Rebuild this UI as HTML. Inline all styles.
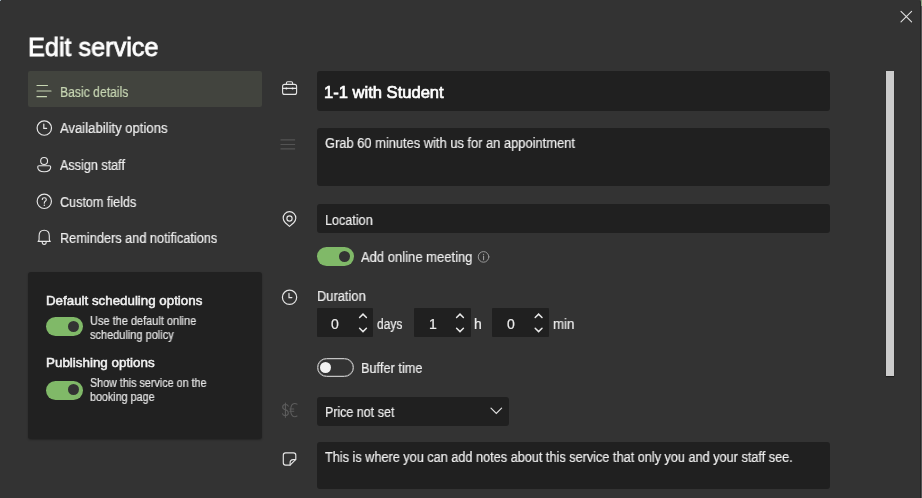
<!DOCTYPE html>
<html><head><meta charset="utf-8">
<style>
html,body{margin:0;padding:0;width:922px;height:498px;overflow:hidden;background:#555;}
body{font-family:"Liberation Sans",sans-serif;position:relative;}
#dlg{position:absolute;left:0;top:0;width:920px;height:498px;background:#333333;border-right:1px solid #262626;border-top-right-radius:3px;overflow:hidden;}
.t{position:absolute;white-space:nowrap;line-height:1;color:#ededed;transform-origin:0 0;will-change:transform;-webkit-text-stroke:0.2px currentColor;}
.box{position:absolute;background:#202020;border-radius:3px;}
svg{position:absolute;left:0;top:0;}
</style></head><body>
<div style="position:absolute;left:0;top:0;width:1px;height:1px;background:#9aabb5;z-index:5"></div>
<div style="position:absolute;left:921px;top:0;width:1px;height:6px;background:#8ba383;"></div>
<div id="dlg">
  <!-- title -->
  <div class="t" style="left:28px;top:34.5px;font-size:25.5px;-webkit-text-stroke:0.8px #fff;color:#fff;transform:scaleX(.99)">Edit service</div>

  <!-- nav -->
  <div class="box" style="left:28px;top:71.2px;width:234px;height:36.2px;background:#42443e;border-radius:2px;"></div>
  <div class="t" style="left:60px;top:85px;font-size:14px;color:#c7d6b3;transform:scaleX(.87)">Basic details</div>
  <div class="t" style="left:60px;top:121px;font-size:14px;transform:scaleX(.935)">Availability options</div>
  <div class="t" style="left:60px;top:157.5px;font-size:14px;transform:scaleX(.9)">Assign staff</div>
  <div class="t" style="left:60px;top:194.5px;font-size:14px;transform:scaleX(.9)">Custom fields</div>
  <div class="t" style="left:60px;top:231px;font-size:14px;transform:scaleX(.91)">Reminders and notifications</div>

  <!-- card -->
  <div class="box" style="left:28px;top:272px;width:234px;height:166.5px;background:#212121;box-shadow:0 1px 2px rgba(0,0,0,.3)"></div>
  <div class="t" style="left:46px;top:294px;font-size:13px;-webkit-text-stroke:0.5px #f2f2f2;color:#f2f2f2;transform:scaleX(1.025)">Default scheduling options</div>
  <div class="box" style="left:46px;top:317px;width:37px;height:19px;border-radius:9.5px;background:#80b968;"></div>
  <div class="box" style="left:68px;top:321.2px;width:11px;height:11px;border-radius:6px;background:#333;"></div>
  <div class="t" style="left:90px;top:313.5px;font-size:12px;line-height:14px;color:#e4e4e4;transform:scaleX(.915)">Use the default online<br>scheduling policy</div>
  <div class="t" style="left:46px;top:356px;font-size:13px;-webkit-text-stroke:0.5px #f2f2f2;color:#f2f2f2;transform:scaleX(1.03)">Publishing options</div>
  <div class="box" style="left:46px;top:380.5px;width:37px;height:19px;border-radius:9.5px;background:#80b968;"></div>
  <div class="box" style="left:68px;top:384.2px;width:11px;height:11px;border-radius:6px;background:#333;"></div>
  <div class="t" style="left:90px;top:375.5px;font-size:12px;line-height:14px;color:#e4e4e4;transform:scaleX(.895)">Show this service on the<br>booking page</div>

  <!-- form -->
  <div class="box" style="left:317px;top:71px;width:512.5px;height:40px;"></div>
  <div class="t" style="left:324px;top:84.5px;font-size:16px;-webkit-text-stroke:0.65px #fff;color:#fff;transform:scaleX(1.035)">1-1 with Student</div>

  <div class="box" style="left:317px;top:128px;width:512.5px;height:58px;"></div>
  <div class="t" style="left:324.5px;top:135.5px;font-size:14px;transform:scaleX(.92)">Grab 60 minutes with us for an appointment</div>

  <div class="box" style="left:317px;top:204px;width:512.5px;height:29px;"></div>
  <div class="t" style="left:325px;top:212.5px;font-size:14px;transform:scaleX(.9)">Location</div>

  <div class="box" style="left:317px;top:247px;width:37px;height:19px;border-radius:9.5px;background:#80b968;"></div>
  <div class="box" style="left:339px;top:251px;width:11px;height:11px;border-radius:6px;background:#333;"></div>
  <div class="t" style="left:361px;top:250px;font-size:14px;transform:scaleX(.93)">Add online meeting</div>

  <div class="t" style="left:317px;top:288.5px;font-size:14px;transform:scaleX(.92)">Duration</div>
  <div class="box" style="left:317px;top:308px;width:56px;height:29px;border-radius:1px;"></div>
  <div class="box" style="left:414px;top:308px;width:57px;height:29px;border-radius:1px;"></div>
  <div class="box" style="left:492px;top:308px;width:57px;height:29px;border-radius:1px;"></div>
  <div class="t" style="left:331px;top:316.5px;font-size:14px;">0</div>
  <div class="t" style="left:429px;top:316.5px;font-size:14px;">1</div>
  <div class="t" style="left:507px;top:316.5px;font-size:14px;">0</div>
  <div class="t" style="left:377px;top:316.5px;font-size:14px;transform:scaleX(.86)">days</div>
  <div class="t" style="left:474px;top:316.5px;font-size:14px;">h</div>
  <div class="t" style="left:553px;top:316.5px;font-size:14px;transform:scaleX(.95)">min</div>

  <div class="box" style="left:317px;top:358.2px;width:35px;height:17px;border-radius:9.5px;background:transparent;border:1px solid #c4c4c4;box-shadow:inset 0 0 0 .3px #c4c4c4"></div>
  <div class="box" style="left:320px;top:361.7px;width:11.2px;height:11.2px;border-radius:6px;background:#f2f2f2;"></div>
  <div class="t" style="left:361px;top:360.5px;font-size:14px;transform:scaleX(.91)">Buffer time</div>

  <div class="box" style="left:317px;top:397px;width:192px;height:29px;"></div>
  <div class="t" style="left:325px;top:404.5px;font-size:14px;transform:scaleX(.89)">Price not set</div>

  <div class="box" style="left:317px;top:442px;width:512.5px;height:47px;"></div>
  <div class="t" style="left:325px;top:450px;font-size:14px;transform:scaleX(.907)">This is where you can add notes about this service that only you and your staff see.</div>

  <!-- scrollbar -->
  <div style="position:absolute;left:886px;top:71px;width:8px;height:305px;background:#cccccc;box-shadow:0 1px 1px rgba(0,0,0,.4)"></div>

  <svg width="922" height="498" viewBox="0 0 922 498" fill="none" stroke-linecap="round">
    <!-- close -->
    <path d="M901 11.3 L911.6 21.9 M911.6 11.3 L901 21.9" stroke="#e0e0e0" stroke-width="1.1"/>
    <!-- nav lines -->
    <path d="M37 85.5 H47.5 M37 91 H51 M37 96.7 H46.5" stroke="#c7d6b3" stroke-width="1.2"/>
    <!-- nav clock -->
    <circle cx="44.3" cy="128.05" r="7.2" stroke="#e6e6e6" stroke-width="1.2"/>
    <path d="M43.8 124.1 V128.4 H46.6" stroke="#e6e6e6" stroke-width="1.2"/>
    <!-- person -->
    <circle cx="44.1" cy="161" r="3.45" stroke="#e6e6e6" stroke-width="1.1"/>
    <path d="M39 165.7 H49.4 Q50.7 165.7 50.7 167 C50.7 170.3 47.6 171.7 44.2 171.7 C40.8 171.7 37.7 170.3 37.7 167 Q37.7 165.7 39 165.7 Z" stroke="#e6e6e6" stroke-width="1.1" stroke-linejoin="round"/>
    <!-- question -->
    <circle cx="44.3" cy="201.3" r="7.15" stroke="#e6e6e6" stroke-width="1.15"/>
    <path d="M42.3 199.5 Q42.3 197.7 44.3 197.7 Q46.3 197.7 46.3 199.4 Q46.3 200.5 45.2 201.2 Q44.3 201.8 44.3 203.2" stroke="#e6e6e6" stroke-width="1.15"/>
    <circle cx="44.3" cy="205.3" r=".75" fill="#e6e6e6"/>
    <!-- bell -->
    <path d="M38.1 241.4 Q39.1 240.7 39.1 239.2 V236 C39.1 232 41.2 230.3 44.2 230.3 C47.2 230.3 49.3 232 49.3 236 V239.2 Q49.3 240.7 50.3 241.4 Z" stroke="#e6e6e6" stroke-width="1.1" stroke-linejoin="round"/>
    <path d="M42.2 241.9 Q42.2 244.4 44.2 244.4 Q46.2 244.4 46.2 241.9" stroke="#e6e6e6" stroke-width="1.1"/>

    <!-- briefcase -->
    <rect x="282.6" y="84.4" width="14" height="10" rx="2" stroke="#e6e6e6" stroke-width="1.1"/>
    <path d="M286.4 84.4 V83 Q286.4 81.7 287.7 81.7 H291.3 Q292.6 81.7 292.6 83 V84.4" stroke="#e6e6e6" stroke-width="1.1"/>
    <path d="M283 88.4 H296.2" stroke="#e6e6e6" stroke-width="1.1"/>
    <circle cx="286.4" cy="88.4" r="1" fill="#f0f0f0"/><circle cx="292.6" cy="88.4" r="1" fill="#f0f0f0"/>
    <!-- dim hamburger -->
    <path d="M280.5 139.9 H295.1 M280.5 144.5 H295.1 M280.5 148.9 H295.1" stroke="#545454" stroke-width="1.15" stroke-linecap="butt"/>
    <!-- pin -->
    <path d="M289.5 226.4 L285.33 222.72 A6.3 6.3 0 1 1 293.67 222.72 Z" stroke="#e6e6e6" stroke-width="1.15" stroke-linejoin="round"/>
    <circle cx="289.5" cy="218.5" r="2.6" stroke="#e6e6e6" stroke-width="1.15"/>
    <!-- info -->
    <circle cx="483.55" cy="256.9" r="5.3" stroke="#9a9a9a" stroke-width="1"/>
    <path d="M483.55 256.1 V259.8" stroke="#9a9a9a" stroke-width="1.1"/>
    <circle cx="483.55" cy="254.3" r=".65" fill="#9a9a9a"/>
    <!-- form clock -->
    <circle cx="289.55" cy="297.3" r="7.15" stroke="#e6e6e6" stroke-width="1.2"/>
    <path d="M289 293.4 V297.6 H291.9" stroke="#e6e6e6" stroke-width="1.2"/>
    <!-- spin chevrons -->
    <path d="M359.6 317.5 L363 314.1 L366.4 317.5 M359.6 328.3 L363 331.6 L366.4 328.3" stroke="#e8e8e8" stroke-width="1.5"/>
    <path d="M456.6 317.5 L460 314.1 L463.4 317.5 M456.6 328.3 L460 331.6 L463.4 328.3" stroke="#e8e8e8" stroke-width="1.5"/>
    <path d="M535.2 317.5 L538.6 314.1 L542 317.5 M535.2 328.3 L538.6 331.6 L542 328.3" stroke="#e8e8e8" stroke-width="1.5"/>
    <!-- price chevron -->
    <path d="M491 408.2 L496.3 413.5 L501.6 408.2" stroke="#e0e0e0" stroke-width="1.2"/>
    <!-- money -->
    <path d="M285.4 402.9 V417.2 M288.3 406.1 Q287.6 404.4 285.4 404.4 Q282.7 404.4 282.7 406.9 Q282.7 409 285.4 409.8 Q288.3 410.6 288.3 413.1 Q288.3 415.6 285.4 415.6 Q283 415.6 282.4 413.7" stroke="#5e5e5e" stroke-width="1.05"/>
    <path d="M297 404.1 Q295.9 403.4 294.7 403.4 Q290.7 403.4 290.7 410.1 Q290.7 416.7 294.7 416.7 Q295.9 416.7 297 416" stroke="#5e5e5e" stroke-width="1.05"/>
    <path d="M289.8 409 H293.8 M289.8 411.3 H293.8" stroke="#5e5e5e" stroke-width=".9"/>
    <!-- note -->
    <path d="M285.6 452.9 H293.5 Q295.8 452.9 295.8 455.2 V459.4 L290.1 465.1 H285.6 Q283.3 465.1 283.3 462.8 V455.2 Q283.3 452.9 285.6 452.9 Z" stroke="#e6e6e6" stroke-width="1.15" stroke-linejoin="round"/>
    <path d="M295.6 459.6 H293.2 Q290.1 459.6 290.1 462.7 V465" stroke="#e6e6e6" stroke-width="1.1" stroke-linejoin="round"/>
  </svg>
  
</div>
</body></html>
